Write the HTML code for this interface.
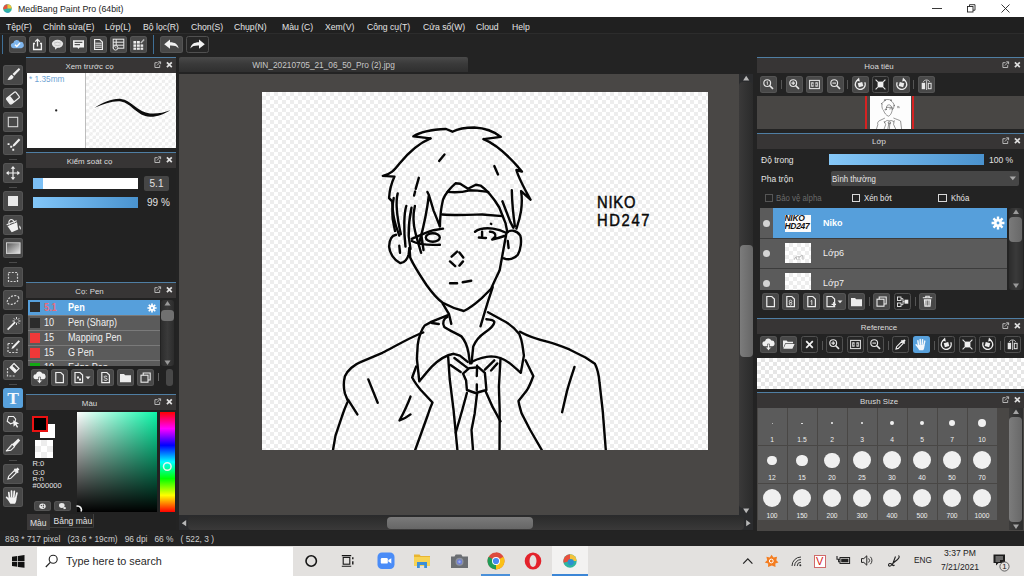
<!DOCTYPE html>
<html lang="vi">
<head>
<meta charset="utf-8">
<title>MediBang Paint Pro (64bit)</title>
<style>
*{box-sizing:border-box;margin:0;padding:0}
html,body{width:1024px;height:576px;overflow:hidden;background:#222222}
body{position:relative;font-family:"Liberation Sans",sans-serif;font-size:9px;color:#d8d8d8;-webkit-font-smoothing:antialiased}
.a{position:absolute}
.t{position:absolute;white-space:nowrap;line-height:1}
.btn{position:absolute;width:17px;height:17px;background:#484848;border-radius:2.5px;box-shadow:inset 0 0 0 1px rgba(255,255,255,.07)}
.btn svg{position:absolute;left:0;top:0;width:17px;height:17px}
.dbtn{position:absolute;width:17px;height:17px;background:#262626;border:1px solid #505050;border-radius:2.5px}
.dbtn svg{position:absolute;left:-1px;top:-1px;width:17px;height:17px}
.tool{position:absolute;left:3px;width:20px;height:20px;background:#484848;border-radius:2.5px;box-shadow:inset 0 0 0 1px rgba(255,255,255,.07)}
.tool svg{position:absolute;left:0;top:0;width:20px;height:20px}
.tsep{position:absolute;left:9px;width:8px;height:1px;background:#4a4a4a}
.vsep{position:absolute;width:1px;height:9px;background:#555}
.ph{position:absolute;height:15px;background:#373535;border-top:1px solid #4f7ea3}
.ph .ttl{position:absolute;left:0;right:0;top:3px;text-align:center;font-size:7.900px;color:#dcdcdc;line-height:1}
.ph .ico{position:absolute;top:2px;right:3px;width:22px;height:10px}
.chk{background-color:#fff;background-image:linear-gradient(45deg,#ededed 25%,transparent 25%,transparent 75%,#ededed 75%),linear-gradient(45deg,#ededed 25%,transparent 25%,transparent 75%,#ededed 75%);background-size:8px 8px;background-position:0 0,4px 4px}
</style>
</head>
<body>
<!-- ===== title bar ===== -->
<div class="a" style="left:0;top:0;width:1024px;height:17px;background:#ffffff"></div>
<svg class="a" style="left:3px;top:4px" width="9" height="9" viewBox="0 0 9 9"><circle cx="4.5" cy="4.5" r="4.3" fill="#2fb4a0"/><path d="M4.5 0.2A4.3 4.3 0 0 0 0.4 5.6L4.5 4.5Z" fill="#e9503c"/><path d="M4.5 0.2A4.3 4.3 0 0 1 8.8 4.5L4.5 4.5Z" fill="#f3c23a"/><path d="M2 7.600A4.300 4.300 0 0 0 7 8z" fill="#2e8fd0"/></svg>
<div class="t" style="left:17.800px;top:4px;font-size:9.600px;color:#1b1b1b;transform:scaleX(.915);transform-origin:0 0">MediBang Paint Pro (64bit)</div>
<svg class="a" style="left:926px;top:0" width="98" height="17" viewBox="0 0 98 17"><g stroke="#222" stroke-width="0.9" fill="none"><path d="M6 8.5h10"/><rect x="41.5" y="6.5" width="5.5" height="5.5"/><path d="M43.5 6.5v-1.8h5.5v5.5h-2"/><path d="M75.5 4.5l8 8M83.5 4.5l-8 8"/></g></svg>
<!-- ===== menu bar ===== -->
<div class="a" style="left:0;top:17px;width:1024px;height:16px;background:#202020"></div>
<div class="t" style="left:6.300px;top:21.500px;font-size:9.600px;color:#e4e4e4;transform:scaleX(.9);transform-origin:0 0">Tệp(F)</div>
<div class="t" style="left:42.500px;top:21.500px;font-size:9.600px;color:#e4e4e4;transform:scaleX(.9);transform-origin:0 0">Chỉnh sửa(E)</div>
<div class="t" style="left:105px;top:21.500px;font-size:9.600px;color:#e4e4e4;transform:scaleX(.9);transform-origin:0 0">Lớp(L)</div>
<div class="t" style="left:142.500px;top:21.500px;font-size:9.600px;color:#e4e4e4;transform:scaleX(.9);transform-origin:0 0">Bộ lọc(R)</div>
<div class="t" style="left:190.500px;top:21.500px;font-size:9.600px;color:#e4e4e4;transform:scaleX(.9);transform-origin:0 0">Chọn(S)</div>
<div class="t" style="left:234px;top:21.500px;font-size:9.600px;color:#e4e4e4;transform:scaleX(.9);transform-origin:0 0">Chụp(N)</div>
<div class="t" style="left:281.500px;top:21.500px;font-size:9.600px;color:#e4e4e4;transform:scaleX(.9);transform-origin:0 0">Màu (C)</div>
<div class="t" style="left:325px;top:21.500px;font-size:9.600px;color:#e4e4e4;transform:scaleX(.9);transform-origin:0 0">Xem(V)</div>
<div class="t" style="left:366.500px;top:21.500px;font-size:9.600px;color:#e4e4e4;transform:scaleX(.9);transform-origin:0 0">Công cụ(T)</div>
<div class="t" style="left:422.500px;top:21.500px;font-size:9.600px;color:#e4e4e4;transform:scaleX(.9);transform-origin:0 0">Cửa sổ(W)</div>
<div class="t" style="left:476px;top:21.500px;font-size:9.600px;color:#e4e4e4;transform:scaleX(.9);transform-origin:0 0">Cloud</div>
<div class="t" style="left:512px;top:21.500px;font-size:9.600px;color:#e4e4e4;transform:scaleX(.9);transform-origin:0 0">Help</div>
<!-- ===== main toolbar ===== -->
<div class="a" style="left:0;top:33px;width:1024px;height:22px;background:#232323;border-top:1px solid #2c2c2c"></div>
<div class="a" style="left:2px;top:35px;width:1px;height:19px;background:#3f6f96"></div>
<div class="a" style="left:153px;top:35px;width:1px;height:19px;background:#3f6f96"></div>
<!-- toolbar buttons -->
<div class="btn" style="left:9px;top:36px"><svg viewBox="0 0 17 17"><path d="M4.6 12.2a2.6 2.6 0 0 1-.3-5.2 3.4 3.4 0 0 1 6.5-1 2.9 2.9 0 0 1 1.6 6.2z" fill="#7fb6ee"/><path d="M6 8.7l1.8 1.8 3.2-3.4" stroke="#fff" stroke-width="1.4" fill="none"/></svg></div>
<div class="btn" style="left:29px;top:36px"><svg viewBox="0 0 17 17"><g stroke="#f2f2f2" stroke-width="1.3" fill="none"><path d="M6 7.5H4.6v6h7.8v-6H11"/><path d="M8.5 10.5V3.5M6.2 5.6l2.3-2.3 2.3 2.3"/></g></svg></div>
<div class="btn" style="left:49px;top:36px"><svg viewBox="0 0 17 17"><ellipse cx="8.5" cy="7.8" rx="5.6" ry="4" fill="#e6e6e6"/><path d="M6.2 10.5l-.2 3.2 3-2.4z" fill="#e6e6e6"/><path d="M5 7.2q3.5-2 7 0M5.6 9q3 1.2 6 0" stroke="#9a9a9a" stroke-width=".5" fill="none"/></svg></div>
<div class="btn" style="left:70px;top:36px"><svg viewBox="0 0 17 17"><path d="M3 4.2h11v7.4H9.6l-1.1 1.5-1.1-1.5H3z" fill="#f0f0f0"/><path d="M4.6 6.4h7.8M4.6 8.6h5.4" stroke="#555" stroke-width="1.1"/></svg></div>
<div class="btn" style="left:90px;top:36px"><svg viewBox="0 0 17 17"><path d="M4.6 3.5h5.2l2.6 2.6v7.4H4.6z" fill="none" stroke="#ececec" stroke-width="1.2"/><path d="M5.4 7.2h6.2M5.4 9.2h6.2M5.4 11.2h6.2" stroke="#ececec" stroke-width="1"/></svg></div>
<div class="btn" style="left:110px;top:36px"><svg viewBox="0 0 17 17"><g stroke="#ececec" stroke-width="1" fill="none"><rect x="3.2" y="3.2" width="10.6" height="9"/><path d="M3.2 6.2h10.6M3.2 9.2h10.6M6.2 3.2v9"/></g><circle cx="5.6" cy="11.8" r="2.3" fill="#474747" stroke="#ececec" stroke-width=".9"/><path d="M5.6 10.6v1.3h1" stroke="#ececec" stroke-width=".6" fill="none"/></svg></div>
<div class="btn" style="left:130px;top:36px"><svg viewBox="0 0 17 17"><g fill="#ececec"><rect x="3.4" y="5" width="2.8" height="2.6"/><rect x="7" y="5" width="2.8" height="2.6"/><rect x="3.4" y="8.4" width="2.8" height="2.4"/><rect x="7" y="8.4" width="2.8" height="2.4"/><rect x="3.4" y="11.6" width="2.8" height="2.2"/><rect x="7" y="11.6" width="2.8" height="2.2"/><rect x="10.6" y="8.4" width="2.6" height="2.4"/><rect x="10.6" y="11.6" width="2.6" height="2.2"/></g><path d="M10.4 6.6l3.2-3.6 1 .9-3.2 3.6z" fill="#bdbdbd"/></svg></div>
<div class="btn" style="left:160px;top:36px;width:23px"><svg viewBox="0 0 23 17" style="width:23px"><path d="M4.2 8.2l5.8-4.6v2.7c5 0 8 2 8.6 6.2-1.9-2.6-4.6-3.1-8.6-3v3.2z" fill="#f2f2f2"/></svg></div>
<div class="dbtn" style="left:186px;top:36px;width:23px"><svg viewBox="0 0 23 17" style="width:23px"><path d="M18.8 8.2l-5.8-4.6v2.7c-5 0-8 2-8.6 6.2 1.900-2.600 4.600-3.100 8.600-3v3.200z" fill="#f2f2f2"/></svg></div>
<!-- ===== left tool strip ===== -->
<div class="a" style="left:0;top:55px;width:26px;height:475px;background:#222222"></div>
<div class="tool" style="top:65px"><svg viewBox="0 0 20 20"><path d="M15.900 3.100l1.300 1.300-5.900 6.400-1.800-1.800z" fill="#f0f0f0"/><path d="M8.700 9.700l2 2c-.9 2.600-3.500 3.500-6.500 3.100 1.500-1 1.700-3.900 4.500-5.100z" fill="#f0f0f0"/></svg></div>
<div class="tool" style="top:88.3px"><svg viewBox="0 0 20 20"><g transform="rotate(-38 10 10)"><rect x="4.200" y="6.300" width="11.600" height="7.400" rx="1.200" fill="none" stroke="#f0f0f0" stroke-width="1.200"/><rect x="4.200" y="6.300" width="4.800" height="7.400" rx="1" fill="#f0f0f0"/></g></svg></div>
<div class="tool" style="top:111.6px"><svg viewBox="0 0 20 20"><rect x="5.300" y="5.300" width="9.400" height="9.400" fill="none" stroke="#dcdcdc" stroke-width="1.050"/></svg></div>
<div class="tool" style="top:135px"><svg viewBox="0 0 20 20"><path d="M15.800 3.600l1.500 1.500-5.600 5.900-2.300.800.800-2.300z" fill="#f0f0f0"/><path d="M4.600 8.200h1.900v1.900H4.600zM7.200 10.800h1.900v1.900H7.200zM9.300 13.800h1.900v1.900H9.300z" fill="#f0f0f0"/></svg></div>
<div class="tsep" style="top:158.5px"></div>
<div class="tool" style="top:163.3px"><svg viewBox="0 0 20 20"><path d="M10 3l2.300 2.700h-1.700v3.700h3.700V7.700L17 10l-2.700 2.300v-1.700h-3.700v3.700h1.700L10 17l-2.300-2.700h1.700v-3.700H5.700v1.700L3 10l2.700-2.300v1.700h3.700V5.700H7.700z" fill="#f0f0f0"/></svg></div>
<div class="tsep" style="top:187px"></div>
<div class="tool" style="top:191.3px"><svg viewBox="0 0 20 20"><rect x="5" y="5" width="10" height="10" fill="#e9e9e9"/></svg></div>
<div class="tool" style="top:214.6px"><svg viewBox="0 0 20 20"><g transform="rotate(-22 10 11)"><path d="M4.800 8.600h10.400l-1.700 7.600H6.500z" fill="#f0f0f0"/><path d="M4.800 8.600h10.400" stroke="#484848" stroke-width=".8"/><path d="M7.200 8.400c-.2-5.600 5.800-5.600 5.600 0" fill="none" stroke="#f0f0f0" stroke-width="1.100"/><path d="M4.600 7.400h10.800" stroke="#f0f0f0" stroke-width="1.100"/></g><path d="M16.600 10.200c1.200 1.600 1.500 3 1.100 4.600-.9-.8-1.500-1.700-1.500-3.200z" fill="#f0f0f0"/></svg></div>
<div class="tool" style="top:238px"><svg viewBox="0 0 20 20"><defs><linearGradient id="gg" x1="0" y1="0" x2="1" y2="1"><stop offset="0" stop-color="#555"/><stop offset="1" stop-color="#e8e8e8"/></linearGradient></defs><rect x="3.500" y="4.800" width="13.600" height="10.600" fill="url(#gg)" stroke="#d8d8d8" stroke-width=".9"/></svg></div>
<div class="tsep" style="top:262px"></div>
<div class="tool" style="top:267px"><svg viewBox="0 0 20 20"><rect x="5.500" y="5.500" width="9" height="9" fill="none" stroke="#cfcfcf" stroke-width="1.200" stroke-dasharray="2 1.300"/></svg></div>
<div class="tool" style="top:290.3px"><svg viewBox="0 0 20 20"><ellipse cx="10" cy="10" rx="6.200" ry="3.800" transform="rotate(-28 10 10)" fill="none" stroke="#cfcfcf" stroke-width="1.200" stroke-dasharray="2 1.300"/></svg></div>
<div class="tool" style="top:313.6px"><svg viewBox="0 0 20 20"><path d="M4 15l7.500-7.500 1.200 1.200L5.200 16.200z" fill="#f2f2f2"/><path d="M13.500 3v2.200M13.500 8.800V11M9.500 7h2.200M15.300 7h2.200M10.800 4.300l1.400 1.400M16.200 4.300l-1.400 1.400M16.200 9.700l-1.400-1.400" stroke="#f2f2f2" stroke-width=".9"/></svg></div>
<div class="tool" style="top:337px"><svg viewBox="0 0 20 20"><path d="M5 6.500h5M5 6.500v9h9v-4.500" fill="none" stroke="#cfcfcf" stroke-width="1.200" stroke-dasharray="2 1.300"/><path d="M15.600 3.200l1.400 1.400-6.400 6.600-2.200.8.800-2.200z" fill="#f2f2f2"/></svg></div>
<div class="tool" style="top:360.3px"><svg viewBox="0 0 20 20"><path d="M4.500 8v8h8.500" fill="none" stroke="#cfcfcf" stroke-width="1.200" stroke-dasharray="2 1.300"/><path d="M11 3.500l5 5-4 4-5-5z" fill="none" stroke="#f2f2f2" stroke-width="1.100"/><path d="M7 7.500l2-2 5 5-2 2z" fill="#f2f2f2"/></svg></div>
<div class="tsep" style="top:384px"></div>
<div class="tool" style="top:388.2px;background:#58a1dc;box-shadow:none"><div class="t" style="left:0;width:20px;top:0;text-align:center;font-family:'Liberation Serif',serif;font-weight:bold;font-size:17.5px;color:#f4f8fc;line-height:20px">T</div></div>
<div class="tool" style="top:412px"><svg viewBox="0 0 20 20"><path d="M5.500 4.500h5l2.200 2.600-1 3.200-4.200 1.500-3.300-2.600z" fill="none" stroke="#f2f2f2" stroke-width="1.100"/><path d="M10.200 8.200l6 3.200-2.600.8 1.600 2.800-1.200.7-1.600-2.800-1.800 1.900z" fill="#f2f2f2"/></svg></div>
<div class="tool" style="top:435.3px"><svg viewBox="0 0 20 20"><path d="M15.300 3.600l1.900 1.900-5.600 6.200-2.500-2.500z" fill="#f0f0f0"/><path d="M9.100 9.200l2.500 2.500-3.600 3.400-4.800.900z" fill="none" stroke="#f0f0f0" stroke-width="1.100" stroke-linejoin="round"/><path d="M3.600 15.800l5-5" stroke="#f0f0f0" stroke-width=".8"/></svg></div>
<div class="tsep" style="top:459.500px"></div>
<div class="tool" style="top:463.700px"><svg viewBox="0 0 20 20"><path d="M5 15l.7-2.800 5.600-5.600 2.100 2.100-5.600 5.600z" fill="none" stroke="#f2f2f2" stroke-width="1.200"/><path d="M10.800 5.400l1.200-1.200 1 .9 1.600-1.500 1.800 1.800-1.500 1.600.9 1-1.200 1.200z" fill="#f2f2f2"/></svg></div>
<div class="tool" style="top:487px"><svg viewBox="0 0 20 20"><g stroke="#f2f2f2" stroke-width="1.700" stroke-linecap="round" fill="none"><path d="M6.400 10.500L5.800 5.600M8.600 9.800L8.500 4M10.800 9.800L11.300 4.300M12.800 10.600L13.900 6"/><path d="M6.300 13.200L3.600 10.400" stroke-width="1.600"/></g><path d="M5.600 10.200h7.900c.3 2.600-.5 4.800-1.500 6.600H7.400c-1-1.200-1.900-2.800-2.400-4.400z" fill="#f2f2f2"/></svg></div>
<!-- ===== left panels ===== -->
<!-- brush preview -->
<div class="ph" style="left:26px;top:57px;width:150px;height:16px"><div class="ttl" style="left:0;right:23px;top:4.500px">Xem trước cọ</div><svg class="ico" style="top:3px" viewBox="0 0 22 10"><path d="M6.600 1.700H3.900v4.800h4.800V4.100" fill="none" stroke="#c4c4c4" stroke-width=".9"/><path d="M5.900 4.500L9.500.9M7.200.8h2.400v2.400" fill="none" stroke="#c4c4c4" stroke-width=".9"/><path d="M15.900 1.300l4.900 4.900M20.800 1.300l-4.900 4.900" stroke="#e0e0e0" stroke-width="1.700"/></svg></div>
<div class="a" style="left:27px;top:73px;width:58px;height:75px;background:#ffffff"></div>
<div class="a" style="left:85px;top:73px;width:1px;height:75px;background:#bdbdbd"></div>
<div class="a chk" style="left:86px;top:73px;width:90px;height:75px;background-size:6.6px 6.6px;background-position:0 0,3.3px 3.3px"></div>
<div class="t" style="left:29px;top:75px;font-size:8.300px;color:#6ea3d3">* 1.35mm</div>
<svg class="a" style="left:27px;top:73px" width="149" height="75" viewBox="27 73 149 75"><circle cx="56.2" cy="110.4" r="1.15" fill="#222"/><path d="M94.5 107.8C104 102.2 112 98.3 121 98.9 131 99.8 138 112.3 150 113.4 157 114 164 112.5 170.5 110.2 164 114 157 116.9 150 116.7 137 116.2 131 102.8 121 101.4 112 100.7 104 104 94.5 107.800z" fill="#0c0c0c"/></svg>
<!-- brush control -->
<div class="a" style="left:26px;top:148px;width:150px;height:4px;background:#222"></div>
<div class="ph" style="left:26px;top:152px;width:150px;height:16px"><div class="ttl" style="left:0;right:23px;top:4.500px">Kiểm soát cọ</div><svg class="ico" style="top:3px" viewBox="0 0 22 10"><path d="M6.600 1.700H3.900v4.800h4.800V4.100" fill="none" stroke="#c4c4c4" stroke-width=".9"/><path d="M5.900 4.500L9.500.9M7.200.8h2.400v2.400" fill="none" stroke="#c4c4c4" stroke-width=".9"/><path d="M15.900 1.300l4.900 4.900M20.800 1.300l-4.900 4.900" stroke="#e0e0e0" stroke-width="1.700"/></svg></div>
<div class="a" style="left:26px;top:168px;width:150px;height:114px;background:#222222"></div>
<div class="a" style="left:33px;top:177.500px;width:105px;height:11px;background:#ffffff"></div>
<div class="a" style="left:33px;top:177.500px;width:10px;height:11px;background:#7cc0f5"></div>
<div class="a" style="left:144px;top:176px;width:25px;height:14.500px;background:#464646;border-radius:2px"></div>
<div class="t" style="left:144px;width:25px;text-align:center;top:178.500px;font-size:10px;color:#e2e2e2">5.1</div>
<div class="a" style="left:33px;top:196.500px;width:105px;height:11px;background:linear-gradient(90deg,#82c6f8,#4a93cf)"></div>
<div class="t" style="left:147px;top:197.500px;font-size:10px;color:#e2e2e2">99 %</div>
<!-- brush list -->
<div class="ph" style="left:26px;top:282px;width:150px;height:16px"><div class="ttl" style="left:0;right:23px;top:4.500px">Cọ: Pen</div><svg class="ico" style="top:3px" viewBox="0 0 22 10"><path d="M6.600 1.700H3.900v4.800h4.800V4.100" fill="none" stroke="#c4c4c4" stroke-width=".9"/><path d="M5.900 4.500L9.500.9M7.200.8h2.400v2.400" fill="none" stroke="#c4c4c4" stroke-width=".9"/><path d="M15.900 1.300l4.900 4.900M20.800 1.300l-4.900 4.900" stroke="#e0e0e0" stroke-width="1.700"/></svg></div>
<div class="a" style="left:26px;top:298px;width:150px;height:96px;background:#222222"></div>
<div class="a" style="left:28px;top:299.500px;width:132px;height:66.500px;background:#5b5b5b;overflow:hidden">
 <div class="a" style="left:0;top:0;width:132px;height:15px;background:#569fdb"></div>
 <div class="a" style="left:0;top:15px;width:132px;height:1px;background:#7a7a7a"></div>
 <div class="a" style="left:0;top:30px;width:132px;height:1px;background:#7a7a7a"></div>
 <div class="a" style="left:0;top:45px;width:132px;height:1px;background:#7a7a7a"></div>
 <div class="a" style="left:0;top:60px;width:132px;height:1px;background:#7a7a7a"></div>
 <div class="a" style="left:2px;top:2.500px;width:10px;height:10px;background:#2b2b2b"></div>
 <div class="a" style="left:2px;top:18px;width:10px;height:10px;background:#2b2b2b"></div>
 <div class="a" style="left:2px;top:33px;width:10px;height:10px;background:#f03838"></div>
 <div class="a" style="left:2px;top:48px;width:10px;height:10px;background:#f03838"></div>
 <div class="a" style="left:2px;top:63px;width:10px;height:10px;background:#12a812"></div>
 <div class="t" style="left:16px;top:3px;font-size:10px;transform:scaleX(.91);transform-origin:0 0;font-weight:bold;color:#e86a78">5.1</div>
 <div class="t" style="left:40px;top:3px;font-size:10px;transform:scaleX(.91);transform-origin:0 0;font-weight:bold;color:#ffffff">Pen</div>
 <div class="t" style="left:16px;top:18.500px;font-size:10px;transform:scaleX(.91);transform-origin:0 0;color:#f0f0f0">10</div>
 <div class="t" style="left:40px;top:18.500px;font-size:10px;transform:scaleX(.91);transform-origin:0 0;color:#f0f0f0">Pen (Sharp)</div>
 <div class="t" style="left:16px;top:33.500px;font-size:10px;transform:scaleX(.91);transform-origin:0 0;color:#f0f0f0">15</div>
 <div class="t" style="left:40px;top:33.500px;font-size:10px;transform:scaleX(.91);transform-origin:0 0;color:#f0f0f0">Mapping Pen</div>
 <div class="t" style="left:16px;top:48.500px;font-size:10px;transform:scaleX(.91);transform-origin:0 0;color:#f0f0f0">15</div>
 <div class="t" style="left:40px;top:48.500px;font-size:10px;transform:scaleX(.91);transform-origin:0 0;color:#f0f0f0">G Pen</div>
 <div class="t" style="left:16px;top:63.500px;font-size:10px;transform:scaleX(.91);transform-origin:0 0;color:#f0f0f0">10</div>
 <div class="t" style="left:40px;top:63.500px;font-size:10px;transform:scaleX(.91);transform-origin:0 0;color:#f0f0f0">Edge Pen</div>
 <svg class="a" style="left:119px;top:3px" width="10" height="10" viewBox="0 0 10 10"><g id="gear"><circle cx="5" cy="5" r="2.800" fill="#fff"/><g stroke="#fff" stroke-width="1.700"><path d="M5 .4v9.200M.4 5h9.200M1.750 1.750l6.500 6.500M8.250 1.750l-6.500 6.500"/></g><circle cx="5" cy="5" r="1" fill="#569fdb"/></g></svg>
</div>
<!-- brush list scrollbar -->
<div class="a" style="left:161px;top:299.500px;width:13px;height:66.500px;background:linear-gradient(90deg,#2c2c2c,#3a3a3a 50%,#2c2c2c);border-radius:3px"></div>
<div class="a" style="left:161px;top:310px;width:13px;height:11px;background:#707070;border-radius:3.500px"></div>
<svg class="a" style="left:161px;top:299px" width="13" height="68" viewBox="0 0 13 68"><path d="M6.500 2l3 4.600h-6z" fill="#9a9a9a"/><path d="M6.500 66l3-4.600h-6z" fill="#9a9a9a"/></svg>
<!-- brush list toolbar -->
<div class="btn" style="left:31px;top:369px"><svg viewBox="0 0 17 17"><path d="M4.800 10.200a2.500 2.500 0 0 1 .2-5 3.300 3.300 0 0 1 6.300-.6 2.800 2.800 0 0 1 .9 5.600z" fill="#f0f0f0"/><path d="M8.500 14.500l-3-3.300h2V8h2v3.200h2z" fill="#f0f0f0" stroke="#474747" stroke-width=".6"/></svg></div>
<div class="btn" style="left:51px;top:369px"><svg viewBox="0 0 17 17"><path d="M4.800 3.500h5l2.600 2.600v7.500H4.800z" fill="none" stroke="#ececec" stroke-width="1.200"/></svg></div>
<div class="btn" style="left:71px;top:369px;width:23px"><svg viewBox="0 0 23 17" style="width:23px"><path d="M4 3.500h5l2.600 2.600v7.500H4z" fill="none" stroke="#ececec" stroke-width="1.200"/><path d="M6 7.500h2v2H6zM8 9.500h2v2H8z" fill="#ececec"/><path d="M14.500 7.500h5l-2.500 2.800z" fill="#ececec"/></svg></div>
<div class="btn" style="left:97px;top:369px"><svg viewBox="0 0 17 17"><path d="M4.800 3.500h5l2.600 2.600v7.500H4.800z" fill="none" stroke="#ececec" stroke-width="1.200"/><path d="M10.200 7.600c-1.800-1-3.500-.4-3.200.7.300 1.200 3.300.6 3.300 2 0 1.200-2 1.500-3.600.5" fill="none" stroke="#ececec" stroke-width=".9"/></svg></div>
<div class="btn" style="left:117px;top:369px"><svg viewBox="0 0 17 17"><path d="M3 5h4l1.200 1.300H14v7H3z" fill="#ececec"/></svg></div>
<div class="btn" style="left:137px;top:369px"><svg viewBox="0 0 17 17"><g fill="none" stroke="#ececec" stroke-width="1.100"><rect x="4" y="6.200" width="7" height="7"/><path d="M6.200 6.200V4h7v7h-2.200"/></g></svg></div>
<div class="a" style="left:158px;top:373px;width:1px;height:8px;background:#666"></div>
<div class="a" style="left:166px;top:369px;width:6.500px;height:17px;background:#484848;border-radius:3px"></div>
<!-- ===== color panel ===== -->
<div class="ph" style="left:26px;top:394px;width:150px;height:16px"><div class="ttl" style="left:0;right:23px;top:4.500px">Màu</div><svg class="ico" style="top:3px" viewBox="0 0 22 10"><path d="M6.600 1.700H3.900v4.800h4.800V4.100" fill="none" stroke="#c4c4c4" stroke-width=".9"/><path d="M5.900 4.500L9.500.9M7.200.8h2.400v2.400" fill="none" stroke="#c4c4c4" stroke-width=".9"/><path d="M15.900 1.300l4.900 4.900M20.800 1.300l-4.900 4.900" stroke="#e0e0e0" stroke-width="1.700"/></svg></div>
<div class="a" style="left:26px;top:410px;width:150px;height:120px;background:#222222"></div>
<div class="a" style="left:77px;top:412px;width:80px;height:99.500px;background:#0cf6a8"></div>
<div class="a" style="left:77px;top:412px;width:80px;height:99.500px;background:linear-gradient(90deg,#ffffff,rgba(255,255,255,0))"></div>
<div class="a" style="left:77px;top:412px;width:80px;height:99.500px;background:linear-gradient(180deg,rgba(0,0,0,0),#000000)"></div>
<div class="a" style="left:160px;top:412px;width:15px;height:99.500px;background:linear-gradient(180deg,#ff0000 0%,#ff00ff 16.600%,#0000ff 33.300%,#00ffff 50%,#00ff00 66.600%,#ffff00 83.300%,#ff0000 100%)"></div>
<svg class="a" style="left:158px;top:460px" width="18" height="14" viewBox="0 0 18 14"><circle cx="9.300" cy="6.500" r="3.800" fill="none" stroke="#e6f6f0" stroke-width="1.500"/></svg>
<svg class="a" style="left:73px;top:504px" width="12" height="10" viewBox="0 0 12 10"><path d="M3.500 2.200a3.800 3.800 0 0 1 4.500 5.300" fill="none" stroke="#f4f4f4" stroke-width="1.600"/></svg>
<div class="a" style="left:39.500px;top:423.500px;width:15px;height:14.500px;background:#ffffff"></div>
<div class="a" style="left:32px;top:415.500px;width:16px;height:16.500px;background:#000000;border:2px solid #ea1212"></div>
<div class="a chk" style="left:34.500px;top:440px;width:18px;height:18px;background-size:12px 12px;background-position:0 0,6px 6px"></div>
<div class="t" style="left:32.500px;top:460px;font-size:7.500px;color:#e6e6e6">R:0</div>
<div class="t" style="left:32.500px;top:468.500px;font-size:7.500px;color:#e6e6e6">G:0</div>
<div class="a" style="left:32px;top:476px;width:30px;height:5px;overflow:hidden"><div class="t" style="left:.5px;top:0;font-size:7.500px;color:#e6e6e6">B:0</div></div>
<div class="t" style="left:32.500px;top:482px;font-size:7.500px;color:#e6e6e6">#000000</div>
<div class="btn" style="left:34px;top:501px;height:10px"><svg viewBox="0 0 17 10" style="height:10px"><ellipse cx="8.500" cy="5.200" rx="3.200" ry="2.700" fill="#e8e8e8"/><circle cx="7.400" cy="4.600" r=".7" fill="#474747"/><circle cx="9.400" cy="4.300" r=".7" fill="#474747"/><circle cx="9.300" cy="6.300" r=".7" fill="#474747"/></svg></div>
<div class="btn" style="left:54px;top:501px;height:10px"><svg viewBox="0 0 17 10" style="height:10px"><ellipse cx="7.800" cy="4.500" rx="2.800" ry="2.400" fill="#e8e8e8"/><path d="M9 6l3 1.800-2.200.4z" fill="#e8e8e8"/><circle cx="10.800" cy="7" r="1.100" fill="#e8e8e8"/></svg></div>
<div class="a" style="left:27px;top:514px;width:23px;height:16px;background:#3b3939"></div>
<div class="t" style="left:30px;top:519px;font-size:8.500px;color:#e0e0e0">Màu</div>
<div class="a" style="left:50px;top:513.500px;width:43.500px;height:14px;background:#252525;border-right:1px solid #3e3e3e;border-bottom:1px solid #3e3e3e;border-radius:0 0 2px 0"></div>
<div class="t" style="left:53.500px;top:517px;font-size:8.500px;color:#e0e0e0">Bảng màu</div>
<!-- ===== center: document tab / canvas area ===== -->
<div class="a" style="left:176px;top:55px;width:581px;height:475px;background:#232323"></div>
<div class="a" style="left:179px;top:56.500px;width:289px;height:15px;background:linear-gradient(180deg,#4a4a4a,#3a3a3a 45%,#2f2f2f);border-radius:2px 2px 0 0"></div>
<div class="t" style="left:179px;width:289px;text-align:center;top:60.500px;font-size:8.300px;color:#c8c8c8">WIN_20210705_21_06_50_Pro (2).jpg</div>
<div class="a" style="left:179px;top:74px;width:574px;height:456px;background:#494745"></div>
<!-- v scrollbar -->
<div class="a" style="left:738.5px;top:74px;width:14.5px;height:441px;background:#2a2b2d"></div>
<div class="a" style="left:738.5px;top:81.5px;width:14.5px;height:426px;background:linear-gradient(90deg,#3a3939,#323232 50%,#2b2b2b);border-radius:4px"></div>
<div class="a" style="left:739.5px;top:244.5px;width:13px;height:112px;background:linear-gradient(90deg,#7c7c7c,#666666);border-radius:4px"></div>
<svg class="a" style="left:738.5px;top:74px" width="14.5" height="441" viewBox="0 0 14.5 441"><path d="M7.2 1.800l3.100 4.600h-6.200z" fill="#b8b8b8"/><path d="M7.2 439.200l3.100-4.600h-6.200z" fill="#b8b8b8"/></svg>
<!-- h scrollbar -->
<div class="a" style="left:179px;top:515px;width:574px;height:15px;background:#2a2b2d"></div>
<div class="a" style="left:188px;top:515.5px;width:556px;height:14px;background:linear-gradient(180deg,#2b2b2b,#323232 50%,#3a3939);border-radius:4px"></div>
<div class="a" style="left:387px;top:516.5px;width:146px;height:12.5px;background:linear-gradient(180deg,#7a7a7a,#666666);border-radius:4px"></div>
<svg class="a" style="left:179px;top:515.5px" width="574" height="14.5" viewBox="0 0 574 14.5"><path d="M2.800 7.200l4.400-3.100v6.200z" fill="#b8b8b8"/><path d="M571.600 7.200l-4.400-3.100v6.200z" fill="#b8b8b8"/></svg>
<!-- canvas -->
<div class="a chk" id="canvas" style="left:261.500px;top:92px;width:446px;height:357.500px;background-color:#ffffff"></div>
<!-- drawing -->
<svg class="a" style="left:261.500px;top:92px" width="446" height="357.500" viewBox="261.500 92 446 357.500" fill="none" stroke="#050505" stroke-width="2.400" stroke-linecap="round" stroke-linejoin="round">
<!-- hair outline -->
<path d="M430 138.400L412.800 136.400C420 131.500 434 129.500 445.600 129L451.900 131.700C458 128.600 466 127.500 473.800 127.500 484 128 493 131 500.300 136.900L483.100 139.100"/>
<path d="M430 138.400C419 143 408 152.500 398.800 163.800 394 170 390 174.500 382.300 175.900L394 176.600C391 183 389 190 388.600 198.100L391.700 201.300C392 210 393.500 220 395.600 226.300L398.800 235.600"/>
<path d="M483.100 139.100C495 144 508 156 517.500 166.900L521.400 171.600 515.900 170C518 178 523 187 530 199.700L520.600 191.100C521.500 197 521.500 204 520.600 210.600 519.500 218 517.500 224 515.900 228.600"/>
<path d="M444 154.400L438.600 160.900M493.800 166.100L497.500 174.400M418.300 177.800L415.200 188.800M414.600 191.500L413.600 195.500"/>
<path d="M397.200 193.400C395.500 200 396 215 400.300 234M405.800 206C403.500 213 403 230 405 246.600M414.400 206C412.500 214 412.500 224 415 233 417 241 419 247 420.600 252.800"/>
<path d="M426.900 191.900L428.400 195C427 207 425 220 419 241.900M428.400 195L433.100 210.600 439.400 226.300"/>
<path d="M411 207.700C409 217 408 228 408.200 236.300L410 249M393.200 198C392 205 391.500 212 392.200 219L394.500 231"/>
<!-- bangs opening -->
<path d="M439.400 226.300C439.500 218 440.500 208 442.500 199.700 444 195 450 187.500 455 183.300L459.700 183.800 467.500 188.800 475.300 184.800 480 185.600C487 190.500 493 198 498.800 207.500L505 223.100 506.600 231"/>
<path d="M447.200 191.900C455 192.600 463 192 469 190.300L476.900 190.600 487.800 191.900"/>
<path d="M441.700 214.500C455 215.500 470 214.800 481.600 214.500L501.900 216.100"/>
<path d="M501.900 201.300L509.700 221.600 512.800 227.800M511.300 190.300C511.500 200 512.500 213 514.400 226.300"/>
<!-- ears -->
<path d="M395.600 234.800C391.500 235.500 388.800 240 388.600 246.600 389 253 393.500 260 399.500 263 404 263.500 407.500 258 408.100 254.400L409 248M398.800 245.800L399.500 252.800"/>
<path d="M506.600 232.500C510 229.500 516 229.800 519.800 235.600 521.500 241 520 250 517.500 254.400 514 259 508 260.500 503.400 258.300M507.300 241L508.100 248"/>
<!-- face -->
<path d="M409 248.100L409.700 257.500C412 263 420 276 426 285 431 292 437 299 442.200 302.800 449 306.500 457 309.500 463.300 311 470 308 478 301 481.300 298.100 486 293.500 489 290.500 490.600 288.800 494 281 497.500 274 499.200 270 501 260 503.400 246.600 505.800 234"/>
<!-- left eye -->
<path d="M411.300 238.800C418 236 425 232.500 433.100 230.200L442.500 228.600M411.300 241C417 244 425 245.500 439.400 244.700M421 236L423 250"/>
<ellipse cx="432.300" cy="237.500" rx="7" ry="4.300"/>
<!-- right eye -->
<path d="M474.500 231.700C478 229 485 227.800 492.500 228.600 498 229.500 502 231 505 232.500M481.600 231.700L481.600 237.200M478.400 237.500L485.500 238M489.400 231.700C493.500 231.500 495.500 234 494.800 236.500L492.500 238.800M491.700 239.500C497 238.500 501 237 505 235.600M490.400 223.800L490.800 224"/>
<!-- nose / mouth -->
<path d="M456.6 251.6L451.1 256.7M449.5 261.4L454.7 266.1M458.9 252.5L462.8 257.5M462.5 261.4L458.9 265.6"/>
<path d="M449.500 283.300L456.600 283.300M462.200 282.200L470.700 280.800"/>
<!-- neck -->
<path d="M442.200 303.600L448.400 313.800 450.800 323.900M492.200 287.200L487.500 301.300 482.800 316.900 480 326.300"/>
<!-- collar -->
<path d="M446.900 316.900C443 318.500 441.500 323 443.800 327 448 330 456 333.500 460.900 336.400 464 340 467 347 468 352.800L469.500 363.400"/>
<path d="M446.900 315.300L431.300 321.600 424.200 325.500C421 329 418 338 417.200 345L416.400 358.800 418.800 381.400C424 375 428 370 431.300 366.600 437 361 446 355 453.100 353.800L459.400 355.600 467.200 361.900"/>
<path d="M431.300 323L438.300 324"/>
<path d="M485.900 319.200C490 319.500 494 320.500 493.800 322.300 493.500 325 488 330 484.400 332.500 480 335.500 475 341 472.700 346.600L471 363.400"/>
<path d="M487.500 312.200L501.600 320C507 322.500 514 328 518.800 334 520.500 338 521.500 342 521.900 345L523.400 355.600 520.300 372.800C516 369 512 365.500 509.400 363.400 505 360 498 356.500 490.600 356.400 484 356.500 476 359.500 471 361.900"/>
<!-- shoulders -->
<path d="M422.700 332.500L418.800 334C408 338.500 395 346 381.900 352.800L360 362.200C354 364.500 347 370 344.400 376.300 343 382 343 388 344.400 393.400L347.500 401.300C345 406 343 412 341.300 416.900L335 435.600 332.500 450"/>
<path d="M367.800 379.400L377.200 402.800M347.500 399.700L356.900 414.400"/>
<path d="M519.500 331.700C527 336 536 339 547.500 341.900 556 344 563 347 569.400 349.700L585 357.500 594.400 363.800C597 369 598.500 376 599 382.500L602.200 410.600 605.300 450"/>
<path d="M574 366.900C571 376 568 385 566.300 391.900L561.600 412.200"/>
<!-- lapels -->
<path d="M415.600 366.600L411.700 377.500C414 382 417 386 420.300 390L432 402.500C430 407 428.500 411 427.300 415L421.900 430 414.700 450"/>
<path d="M410 396.600C407 405 403 413 399 420.500 403 419 407 416.800 410 414.400"/>
<path d="M525 360.300L532.800 376C531 381 529 386 526.600 390L518 401C518.500 405 520 409.500 521.100 413.400L529.700 430 541.300 450"/>
<!-- shirt and tie -->
<path d="M447.700 357.200L449.200 379 453.100 410.300 456.900 450M500 358.800L498.400 386.900 499.200 410.300 499 450"/>
<path d="M462.500 373.600L468.800 368.100 478.100 367.300 484.400 372.800 485.900 390 475 393 466.400 390 465.600 380.600Z"/>
<path d="M476.600 365.800L476.300 376M476.300 384.500L476.300 390"/>
<path d="M453.900 358L467.200 368.100M450 365L460.200 372M493.800 360.300L484.400 369.700M496.900 363.400L490.600 370.500"/>
<path d="M466.400 393L461.700 410.300 455.300 432.500M476.600 393L474.200 413.400 471 430 472.500 450M485.200 391.600L492.200 407.200 500 421.300"/>
</svg>
<div class="t" style="left:596.6px;top:194.3px;font-size:16.6px;line-height:17.6px;color:#0a0a0a;-webkit-text-stroke:.5px #0a0a0a;transform:scaleX(.89);transform-origin:0 0"><span style="letter-spacing:.9px">NIKO</span><br><span style="letter-spacing:1.85px">HD247</span></div>
<!-- ===== right: navigator ===== -->
<div class="a" style="left:753px;top:55px;width:271px;height:475px;background:#232323"></div>
<div class="ph" style="left:757px;top:57px;width:267px;height:16px"><div class="ttl" style="left:0;right:23px;top:4.500px">Hoa tiêu</div><svg class="ico" style="top:3px" viewBox="0 0 22 10"><path d="M6.600 1.700H3.900v4.800h4.800V4.100" fill="none" stroke="#c4c4c4" stroke-width=".9"/><path d="M5.900 4.500L9.500.9M7.200.8h2.400v2.400" fill="none" stroke="#c4c4c4" stroke-width=".9"/><path d="M15.900 1.300l4.900 4.900M20.800 1.300l-4.900 4.900" stroke="#e0e0e0" stroke-width="1.700"/></svg></div>
<div class="a" style="left:757px;top:73px;width:267px;height:23px;background:#232323"></div>
<div class="btn" style="left:760px;top:76px"><svg viewBox="0 0 17 17"><circle cx="7.2" cy="7.1" r="3.4" fill="none" stroke="#e6e6e6" stroke-width="1.15"/><path d="M9.8 9.7l3.2 3.200" stroke="#e6e6e6" stroke-width="1.55"/><path d="M6.6 6.1l.8-.5v3.200" stroke="#e6e6e6" stroke-width=".85" fill="none"/></svg></div>
<div class="vsep" style="left:781px;top:80px"></div>
<div class="btn" style="left:785.500px;top:76px"><svg viewBox="0 0 17 17"><circle cx="7.2" cy="7.1" r="3.4" fill="none" stroke="#e6e6e6" stroke-width="1.15"/><path d="M9.8 9.7l3.2 3.200" stroke="#e6e6e6" stroke-width="1.55"/><path d="M5.4 7.1h3.6M7.2 5.300v3.600" stroke="#e6e6e6" stroke-width="1.1"/></svg></div>
<div class="btn" style="left:806px;top:76px"><svg viewBox="0 0 17 17"><rect x="3.6" y="4.4" width="9.8" height="8.2" fill="none" stroke="#e2e2e2" stroke-width="1.05"/><path d="M5.2 6.200h2.400v4.600H5.200zM9.400 6.200h2.400v4.600H9.400z" fill="#dcdcdc"/><path d="M7.600 8.500l-1.400-1.300v2.600zM9.400 8.500l1.400-1.300v2.600z" fill="#484848"/></svg></div>
<div class="btn" style="left:826.500px;top:76px"><svg viewBox="0 0 17 17"><circle cx="7.2" cy="7.1" r="3.4" fill="none" stroke="#e6e6e6" stroke-width="1.15"/><path d="M9.8 9.7l3.2 3.200" stroke="#e6e6e6" stroke-width="1.55"/><path d="M5.4 7.1h3.6" stroke="#e6e6e6" stroke-width="1.1"/></svg></div>
<div class="vsep" style="left:847px;top:80px"></div>
<div class="btn" style="left:851.500px;top:76px"><svg viewBox="0 0 17 17"><path d="M12.800 6.200a5 5 0 1 1-6.600-2.400" fill="none" stroke="#ececec" stroke-width="1.300"/><path d="M7 1.600L4.200 4.400l3.600 1.200z" fill="#ececec"/><rect x="6.200" y="6.500" width="4.600" height="4.200" fill="#ececec" transform="rotate(-15 8.500 8.500)"/></svg></div>
<div class="dbtn" style="left:872px;top:76px"><svg viewBox="0 0 17 17"><rect x="5.6" y="5.6" width="5.8" height="5.800" fill="#f0f0f0"/><path d="M3.600 3.600l2.200 2.200M13.400 3.600l-2.200 2.200M13.400 13.400l-2.200-2.200M3.600 13.400l2.200-2.200" stroke="#e4e4e4" stroke-width="1.1"/></svg></div>
<div class="btn" style="left:892.500px;top:76px"><svg viewBox="0 0 17 17"><path d="M4.200 6.200a5 5 0 1 0 6.600-2.400" fill="none" stroke="#ececec" stroke-width="1.300"/><path d="M10 1.600l2.800 2.800-3.600 1.200z" fill="#ececec"/><rect x="6.200" y="6.500" width="4.600" height="4.200" fill="#ececec" transform="rotate(15 8.500 8.500)"/></svg></div>
<div class="vsep" style="left:913px;top:80px"></div>
<div class="btn" style="left:917.500px;top:76px"><svg viewBox="0 0 17 17"><rect x="3.7" y="6.8" width="3.4" height="6.4" fill="#e8e8e8"/><rect x="10.3" y="7.3" width="2.8" height="5.4" fill="none" stroke="#e8e8e8" stroke-width="1"/><path d="M8.6 4.5v9.500" stroke="#e8e8e8" stroke-width=".8"/><path d="M5.4 5.800c.8-2.400 5.400-2.400 6.200 0" fill="none" stroke="#e8e8e8" stroke-width=".8"/></svg></div>
<div class="a" style="left:757px;top:96px;width:267px;height:33px;background:#484644"></div>
<div class="a" style="left:865px;top:96px;width:2px;height:33px;background:#d62222"></div>
<div class="a" style="left:911.500px;top:96px;width:2.500px;height:33px;background:#d62222"></div>
<div class="a" style="left:870px;top:96px;width:41px;height:33px;background:#fdfdfd"></div>
<svg class="a" style="left:870px;top:96px" width="41" height="33" viewBox="261.500 92 446 357.500" fill="none" stroke="#444" stroke-width="6" stroke-linecap="round"><path d="M430 138L413 136C430 128 460 126 500 137L483 139C500 150 520 170 530 200L520 191C522 210 518 225 516 229M430 138C410 150 395 172 382 176L394 177C388 200 392 220 399 236"/><path d="M409 248C415 275 440 305 463 311 485 300 497 280 506 234M440 226C440 200 450 186 467 188 480 184 495 200 506 231M442 215H502"/><ellipse cx="432" cy="238" rx="8" ry="5"/><path d="M475 232C485 228 497 229 505 233"/><path d="M419 334L360 362C343 372 342 395 347 401L332 450M520 332C550 345 585 355 594 364L605 450M418 381C430 362 453 348 467 362M520 373C510 360 490 352 471 362M416 367L432 402 415 450M525 360L518 401 541 450M463 374H485V392H466ZM466 393L455 450M477 393L472 450"/><path d="M560 205h16M560 218h22" stroke-width="5"/></svg>
<!-- ===== right: layers ===== -->
<div class="a" style="left:757px;top:129px;width:267px;height:3.500px;background:#232323"></div>
<div class="ph" style="left:757px;top:132.500px;width:267px;height:16px"><div class="ttl" style="left:0;right:23px;top:4.500px">Lớp</div><svg class="ico" style="top:3px" viewBox="0 0 22 10"><path d="M6.600 1.700H3.900v4.800h4.800V4.100" fill="none" stroke="#c4c4c4" stroke-width=".9"/><path d="M5.900 4.500L9.500.9M7.200.8h2.400v2.400" fill="none" stroke="#c4c4c4" stroke-width=".9"/><path d="M15.900 1.300l4.900 4.900M20.800 1.300l-4.900 4.900" stroke="#e0e0e0" stroke-width="1.700"/></svg></div>
<div class="a" style="left:757px;top:148.500px;width:267px;height:166px;background:#232323"></div>
<div class="t" style="left:761px;top:155.500px;font-size:8.500px;color:#e2e2e2">Độ trong</div>
<div class="a" style="left:829px;top:153.500px;width:154.500px;height:11.500px;background:linear-gradient(90deg,#86c8f8,#4a92ce)"></div>
<div class="t" style="left:989px;top:155.500px;font-size:8.500px;color:#e2e2e2">100 %</div>
<div class="t" style="left:761px;top:174.500px;font-size:8.500px;color:#e2e2e2">Pha trộn</div>
<div class="a" style="left:830.500px;top:171px;width:188.500px;height:14.500px;background:#464646;border-radius:2px"></div>
<div class="t" style="left:832px;top:174.500px;font-size:8.500px;color:#e6e6e6;transform:scaleX(.92);transform-origin:0 0">Bình thường</div>
<svg class="a" style="left:1009px;top:176px" width="8" height="5" viewBox="0 0 8 5"><path d="M.6.600h6.400l-3.200 3.600z" fill="#a8a8a8"/></svg>
<div class="a" style="left:764.500px;top:193.500px;width:8px;height:8px;border:1px solid #555"></div>
<div class="t" style="left:776px;top:193.500px;font-size:8.500px;color:#6a6a6a;transform:scaleX(.92);transform-origin:0 0">Bảo vệ alpha</div>
<div class="a" style="left:851.500px;top:193.500px;width:8.500px;height:8.500px;border:1px solid #d8d8d8"></div>
<div class="t" style="left:863.500px;top:193.500px;font-size:8.500px;color:#e6e6e6;transform:scaleX(.92);transform-origin:0 0">Xén bớt</div>
<div class="a" style="left:938px;top:193.500px;width:8.500px;height:8.500px;border:1px solid #d8d8d8"></div>
<div class="t" style="left:950.500px;top:193.500px;font-size:8.500px;color:#e6e6e6;transform:scaleX(.92);transform-origin:0 0">Khóa</div>
<!-- layer list -->
<div class="a" style="left:759.500px;top:208px;width:247.500px;height:81.500px;background:#5b5b5b;overflow:hidden">
 <div class="a" style="left:13.500px;top:0;width:234px;height:30px;background:#569fdb"></div>
 <div class="a" style="left:0;top:30px;width:247.500px;height:1px;background:#3c3c3c"></div>
 <div class="a" style="left:0;top:60px;width:247.500px;height:1px;background:#3c3c3c"></div>
 <div class="a" style="left:3px;top:11.500px;width:7px;height:7px;border-radius:50%;background:#d4d4d4"></div>
 <div class="a" style="left:3px;top:41.500px;width:7px;height:7px;border-radius:50%;background:#d4d4d4"></div>
 <div class="a" style="left:3px;top:71.500px;width:7px;height:7px;border-radius:50%;background:#d4d4d4"></div>
 <div class="a" style="left:25px;top:6.500px;width:26px;height:17px;background:#fbfbfb;overflow:hidden"><div class="t" style="left:0;top:-1px;font-size:8.500px;line-height:8.500px;font-weight:bold;font-style:italic;color:#111;letter-spacing:-.3px">NIKO<br>HD247</div></div>
 <div class="a chk" style="left:25px;top:35px;width:26px;height:20px"></div>
 <svg class="a" style="left:25px;top:35px" width="26" height="20" viewBox="0 0 26 20"><path d="M9 17c1-3 3-4 5-3s2-3 3-2 1 3 1 5M11 14l1 3M14 13v4" fill="none" stroke="#9a9a9a" stroke-width=".6"/></svg>
 <div class="a chk" style="left:25px;top:65px;width:26px;height:20px"></div>
 <div class="t" style="left:63.500px;top:10.500px;font-size:9px;font-weight:bold;color:#ffffff">Niko</div>
 <div class="t" style="left:63.500px;top:40.500px;font-size:9px;color:#f0f0f0">Lớp6</div>
 <div class="t" style="left:63.500px;top:70.500px;font-size:9px;color:#f0f0f0">Lớp7</div>
 <svg class="a" style="left:231px;top:8px" width="14" height="14" viewBox="0 0 10 10"><circle cx="5" cy="5" r="2.800" fill="#fff"/><g stroke="#fff" stroke-width="1.700"><path d="M5 .4v9.200M.4 5h9.200M1.750 1.750l6.500 6.500M8.250 1.750l-6.500 6.500"/></g><circle cx="5" cy="5" r="1" fill="#569fdb"/></svg>
</div>
<!-- layer scrollbar -->
<div class="a" style="left:1008.500px;top:208px;width:14px;height:81.500px;background:linear-gradient(90deg,#2c2c2c,#3a3a3a 50%,#2c2c2c);border-radius:3px"></div>
<div class="a" style="left:1009px;top:217px;width:13px;height:24.500px;background:linear-gradient(90deg,#7a7a7a,#686868);border-radius:4px"></div>
<svg class="a" style="left:1008.500px;top:208px" width="14" height="81.500" viewBox="0 0 14 81.500"><path d="M7 1.500l3 4.600h-6z" fill="#9a9a9a"/><path d="M7 80l3-4.600h-6z" fill="#9a9a9a"/></svg>
<!-- layer toolbar -->
<div class="btn" style="left:761.500px;top:292.500px"><svg viewBox="0 0 17 17"><path d="M4.800 3.500h5l2.600 2.600v7.500H4.800z" fill="none" stroke="#ececec" stroke-width="1.200"/></svg></div>
<div class="btn" style="left:782px;top:292.500px"><svg viewBox="0 0 17 17"><path d="M4.800 3.500h5l2.600 2.600v7.500H4.800z" fill="none" stroke="#ececec" stroke-width="1.200"/><circle cx="8.600" cy="8.400" r="1.300" fill="none" stroke="#ececec" stroke-width=".8"/><circle cx="8.600" cy="10.800" r="1.300" fill="none" stroke="#ececec" stroke-width=".8"/></svg></div>
<div class="btn" style="left:802.500px;top:292.500px"><svg viewBox="0 0 17 17"><path d="M4.800 3.500h5l2.600 2.600v7.500H4.800z" fill="none" stroke="#ececec" stroke-width="1.200"/><path d="M7.600 8.200l1.200-.8v4.600" fill="none" stroke="#ececec" stroke-width=".9"/></svg></div>
<div class="btn" style="left:822.500px;top:292.500px;width:23px"><svg viewBox="0 0 23 17" style="width:23px"><path d="M4 3.500h5l2.600 2.600v7.500H4z" fill="none" stroke="#ececec" stroke-width="1.200"/><path d="M8.600 11.300h4.400M10.800 9.100v4.400" stroke="#ececec" stroke-width="1.3"/><path d="M8.200 8.700h5.200v5.200H8.200z" fill="none"/><path d="M14.500 7.500h5l-2.500 2.800z" fill="#ececec"/></svg></div>
<div class="btn" style="left:848px;top:292.500px"><svg viewBox="0 0 17 17"><path d="M3 5h4l1.200 1.300H14v7H3z" fill="#ececec"/></svg></div>
<div class="vsep" style="left:869px;top:296.500px"></div>
<div class="btn" style="left:873px;top:292.500px"><svg viewBox="0 0 17 17"><g fill="none" stroke="#ececec" stroke-width="1.100"><rect x="4" y="6.200" width="7" height="7"/><path d="M6.200 6.200V4h7v7h-2.200"/></g></svg></div>
<div class="dbtn" style="left:894px;top:292.500px"><svg viewBox="0 0 17 17"><rect x="3.500" y="4" width="3.500" height="3.500" fill="none" stroke="#ececec" stroke-width=".9"/><rect x="3.500" y="10" width="3.500" height="3.500" fill="none" stroke="#ececec" stroke-width=".9"/><path d="M7 5.700h2v6H7M9 8.700h1.500" fill="none" stroke="#ececec" stroke-width=".9"/><rect x="10.500" y="6.700" width="3.800" height="4" fill="#ececec"/></svg></div>
<div class="vsep" style="left:914.500px;top:296.500px"></div>
<div class="btn" style="left:919px;top:292.500px"><svg viewBox="0 0 17 17"><path d="M4.800 6.200h7.400l-.6 7.600H5.400z" fill="#ececec"/><path d="M3.800 4.800h9.400M6.800 4.600V3.200h3.400v1.400" fill="none" stroke="#ececec" stroke-width="1.100"/><path d="M7 7.500v5M8.500 7.500v5M10 7.500v5" stroke="#474747" stroke-width=".7"/></svg></div>
<!-- ===== right: reference ===== -->
<div class="a" style="left:757px;top:314.500px;width:267px;height:4px;background:#232323"></div>
<div class="ph" style="left:757px;top:318px;width:267px;height:16px"><div class="ttl" style="left:0;right:23px;top:4.500px">Reference</div><svg class="ico" style="top:3px" viewBox="0 0 22 10"><path d="M6.600 1.700H3.900v4.800h4.800V4.100" fill="none" stroke="#c4c4c4" stroke-width=".9"/><path d="M5.900 4.500L9.500.9M7.200.8h2.400v2.400" fill="none" stroke="#c4c4c4" stroke-width=".9"/><path d="M15.900 1.300l4.900 4.900M20.800 1.300l-4.900 4.900" stroke="#e0e0e0" stroke-width="1.700"/></svg></div>
<div class="a" style="left:757px;top:334px;width:267px;height:23.500px;background:#232323"></div>
<div class="btn" style="left:760px;top:336px"><svg viewBox="0 0 17 17"><path d="M4.800 10.200a2.500 2.500 0 0 1 .2-5 3.300 3.300 0 0 1 6.300-.6 2.800 2.800 0 0 1 .9 5.600z" fill="#f0f0f0"/><path d="M8.500 14.500l-3-3.300h2V8h2v3.200h2z" fill="#f0f0f0" stroke="#474747" stroke-width=".6"/></svg></div>
<div class="btn" style="left:780px;top:336px"><svg viewBox="0 0 17 17"><path d="M3 4.500h3.600l1.100 1.200H13v1.600H5.200L3 12.500z" fill="#ececec"/><path d="M5.600 8h9l-2.200 4.800H3.400z" fill="#ececec"/></svg></div>
<div class="dbtn" style="left:800.5px;top:336px"><svg viewBox="0 0 17 17"><path d="M5.200 5.200l6.600 6.600M11.800 5.200l-6.600 6.600" stroke="#f2f2f2" stroke-width="1.700"/></svg></div>
<div class="vsep" style="left:821.5px;top:340.500px"></div>
<div class="dbtn" style="left:826px;top:336px"><svg viewBox="0 0 17 17"><circle cx="7.2" cy="7.1" r="3.4" fill="none" stroke="#e6e6e6" stroke-width="1.15"/><path d="M9.8 9.7l3.2 3.200" stroke="#e6e6e6" stroke-width="1.55"/><path d="M5.4 7.1h3.6M7.2 5.300v3.600" stroke="#e6e6e6" stroke-width="1.1"/></svg></div>
<div class="dbtn" style="left:846.5px;top:336px"><svg viewBox="0 0 17 17"><rect x="3.6" y="4.4" width="9.8" height="8.2" fill="none" stroke="#e2e2e2" stroke-width="1.05"/><path d="M5.2 6.200h2.400v4.600H5.200zM9.400 6.200h2.400v4.600H9.400z" fill="#dcdcdc"/><path d="M7.600 8.500l-1.400-1.300v2.600zM9.400 8.500l1.400-1.300v2.600z" fill="#484848"/></svg></div>
<div class="dbtn" style="left:866.5px;top:336px"><svg viewBox="0 0 17 17"><circle cx="7.2" cy="7.1" r="3.4" fill="none" stroke="#e6e6e6" stroke-width="1.15"/><path d="M9.8 9.7l3.2 3.200" stroke="#e6e6e6" stroke-width="1.55"/><path d="M5.4 7.1h3.6" stroke="#e6e6e6" stroke-width="1.1"/></svg></div>
<div class="vsep" style="left:887.5px;top:340.500px"></div>
<div class="dbtn" style="left:892px;top:336px"><svg viewBox="0 0 17 17"><path d="M4 13l.6-2.300 4.800-4.800 1.700 1.700-4.800 4.800z" fill="none" stroke="#f2f2f2" stroke-width="1.100"/><path d="M9 4.800l1-1 .9.800 1.300-1.300 1.500 1.500-1.300 1.300.8.900-1 1z" fill="#f2f2f2"/></svg></div>
<div class="btn" style="left:912.5px;top:336px;background:#58a1dc;box-shadow:none"><svg viewBox="0 0 17 17"><g stroke="#f4f8fc" stroke-width="1.45" stroke-linecap="round" fill="none"><path d="M5.4 8.9L4.9 4.8M7.300 8.300L7.200 3.400M9.200 8.300L9.600 3.700M10.900 9L11.800 5.100"/><path d="M5.300 11.200L3.100 8.800" stroke-width="1.35"/></g><path d="M4.800 8.700h6.700c.2 2.200-.4 4.100-1.300 5.600H6.300c-.9-1-1.600-2.400-2-3.700z" fill="#f4f8fc"/></svg></div>
<div class="vsep" style="left:934px;top:340.500px"></div>
<div class="dbtn" style="left:938px;top:336px"><svg viewBox="0 0 17 17"><path d="M12.800 6.200a5 5 0 1 1-6.600-2.400" fill="none" stroke="#ececec" stroke-width="1.300"/><path d="M7 1.600L4.200 4.400l3.600 1.200z" fill="#ececec"/><rect x="6.200" y="6.500" width="4.600" height="4.200" fill="#ececec" transform="rotate(-15 8.500 8.500)"/></svg></div>
<div class="dbtn" style="left:958.5px;top:336px"><svg viewBox="0 0 17 17"><rect x="5.6" y="5.6" width="5.8" height="5.800" fill="#f0f0f0"/><path d="M3.600 3.600l2.200 2.200M13.400 3.600l-2.200 2.200M13.400 13.400l-2.200-2.200M3.600 13.400l2.200-2.200" stroke="#e4e4e4" stroke-width="1.1"/></svg></div>
<div class="dbtn" style="left:978.5px;top:336px"><svg viewBox="0 0 17 17"><path d="M4.200 6.200a5 5 0 1 0 6.600-2.400" fill="none" stroke="#ececec" stroke-width="1.300"/><path d="M10 1.600l2.800 2.800-3.600 1.200z" fill="#ececec"/><rect x="6.200" y="6.500" width="4.600" height="4.200" fill="#ececec" transform="rotate(15 8.500 8.500)"/></svg></div>
<div class="vsep" style="left:999.5px;top:340.500px"></div>
<div class="dbtn" style="left:1003.5px;top:336px"><svg viewBox="0 0 17 17"><rect x="3.7" y="6.8" width="3.4" height="6.4" fill="#e8e8e8"/><rect x="10.3" y="7.3" width="2.8" height="5.4" fill="none" stroke="#e8e8e8" stroke-width="1"/><path d="M8.6 4.5v9.500" stroke="#e8e8e8" stroke-width=".8"/><path d="M5.4 5.800c.8-2.400 5.400-2.400 6.200 0" fill="none" stroke="#e8e8e8" stroke-width=".8"/></svg></div>
<div class="a chk" style="left:757px;top:357.500px;width:267px;height:31px;background-image:linear-gradient(45deg,#e6e6e6 25%,transparent 25%,transparent 75%,#e6e6e6 75%),linear-gradient(45deg,#e6e6e6 25%,transparent 25%,transparent 75%,#e6e6e6 75%)"></div>
<!-- ===== right: brush size ===== -->
<div class="a" style="left:757px;top:388.500px;width:267px;height:4px;background:#232323"></div>
<div class="ph" style="left:757px;top:392px;width:267px;height:16px"><div class="ttl" style="left:0;right:23px;top:4.500px">Brush Size</div><svg class="ico" style="top:3px" viewBox="0 0 22 10"><path d="M6.600 1.700H3.900v4.800h4.800V4.100" fill="none" stroke="#c4c4c4" stroke-width=".9"/><path d="M5.900 4.500L9.500.9M7.200.8h2.400v2.400" fill="none" stroke="#c4c4c4" stroke-width=".9"/><path d="M15.900 1.300l4.900 4.900M20.800 1.300l-4.900 4.900" stroke="#e0e0e0" stroke-width="1.700"/></svg></div>
<div class="a" style="left:757px;top:408px;width:267px;height:122.500px;background:#494745"></div>
<div class="a" style="left:757.5px;top:408.3px;width:29px;height:36.500px;background:#5b5b5b"></div>
<div class="a" style="left:771.55px;top:422.75px;width:0.9px;height:0.9px;border-radius:50%;background:#f0f0f0"></div>
<div class="t" style="left:757.5px;width:29px;text-align:center;top:437.4px;font-size:6.700px;color:#f0f0f0">1</div>
<div class="a" style="left:787.5px;top:408.3px;width:29px;height:36.500px;background:#5b5b5b"></div>
<div class="a" style="left:801.4px;top:422.6px;width:1.2px;height:1.2px;border-radius:50%;background:#f0f0f0"></div>
<div class="t" style="left:787.5px;width:29px;text-align:center;top:437.4px;font-size:6.700px;color:#f0f0f0">1.5</div>
<div class="a" style="left:817.5px;top:408.3px;width:29px;height:36.500px;background:#5b5b5b"></div>
<div class="a" style="left:831.1px;top:422.3px;width:1.8px;height:1.8px;border-radius:50%;background:#f0f0f0"></div>
<div class="t" style="left:817.5px;width:29px;text-align:center;top:437.4px;font-size:6.700px;color:#f0f0f0">2</div>
<div class="a" style="left:847.5px;top:408.3px;width:29px;height:36.500px;background:#5b5b5b"></div>
<div class="a" style="left:860.7px;top:421.9px;width:2.6px;height:2.6px;border-radius:50%;background:#f0f0f0"></div>
<div class="t" style="left:847.5px;width:29px;text-align:center;top:437.4px;font-size:6.700px;color:#f0f0f0">3</div>
<div class="a" style="left:877.5px;top:408.3px;width:29px;height:36.500px;background:#5b5b5b"></div>
<div class="a" style="left:890.1px;top:421.3px;width:3.8px;height:3.8px;border-radius:50%;background:#f0f0f0"></div>
<div class="t" style="left:877.5px;width:29px;text-align:center;top:437.4px;font-size:6.700px;color:#f0f0f0">4</div>
<div class="a" style="left:907.5px;top:408.3px;width:29px;height:36.500px;background:#5b5b5b"></div>
<div class="a" style="left:919.8px;top:421px;width:4.4px;height:4.4px;border-radius:50%;background:#f0f0f0"></div>
<div class="t" style="left:907.5px;width:29px;text-align:center;top:437.4px;font-size:6.700px;color:#f0f0f0">5</div>
<div class="a" style="left:937.5px;top:408.3px;width:29px;height:36.500px;background:#5b5b5b"></div>
<div class="a" style="left:949px;top:420.2px;width:6px;height:6px;border-radius:50%;background:#f0f0f0"></div>
<div class="t" style="left:937.5px;width:29px;text-align:center;top:437.4px;font-size:6.700px;color:#f0f0f0">7</div>
<div class="a" style="left:967.5px;top:408.3px;width:29px;height:36.500px;background:#5b5b5b"></div>
<div class="a" style="left:978px;top:419.2px;width:8px;height:8px;border-radius:50%;background:#f0f0f0"></div>
<div class="t" style="left:967.5px;width:29px;text-align:center;top:437.4px;font-size:6.700px;color:#f0f0f0">10</div>
<div class="a" style="left:757.5px;top:446px;width:29px;height:36.500px;background:#5b5b5b"></div>
<div class="a" style="left:767.3px;top:455.7px;width:9.4px;height:9.4px;border-radius:50%;background:#f0f0f0"></div>
<div class="t" style="left:757.5px;width:29px;text-align:center;top:475.1px;font-size:6.700px;color:#f0f0f0">12</div>
<div class="a" style="left:787.5px;top:446px;width:29px;height:36.500px;background:#5b5b5b"></div>
<div class="a" style="left:796.4px;top:454.8px;width:11.2px;height:11.2px;border-radius:50%;background:#f0f0f0"></div>
<div class="t" style="left:787.5px;width:29px;text-align:center;top:475.1px;font-size:6.700px;color:#f0f0f0">15</div>
<div class="a" style="left:817.5px;top:446px;width:29px;height:36.500px;background:#5b5b5b"></div>
<div class="a" style="left:824.3px;top:452.7px;width:15.4px;height:15.4px;border-radius:50%;background:#f0f0f0"></div>
<div class="t" style="left:817.5px;width:29px;text-align:center;top:475.1px;font-size:6.700px;color:#f0f0f0">20</div>
<div class="a" style="left:847.5px;top:446px;width:29px;height:36.500px;background:#5b5b5b"></div>
<div class="a" style="left:853px;top:451.4px;width:18px;height:18px;border-radius:50%;background:#f0f0f0"></div>
<div class="t" style="left:847.5px;width:29px;text-align:center;top:475.1px;font-size:6.700px;color:#f0f0f0">25</div>
<div class="a" style="left:877.5px;top:446px;width:29px;height:36.500px;background:#5b5b5b"></div>
<div class="a" style="left:883px;top:451.4px;width:18px;height:18px;border-radius:50%;background:#f0f0f0"></div>
<div class="t" style="left:877.5px;width:29px;text-align:center;top:475.1px;font-size:6.700px;color:#f0f0f0">30</div>
<div class="a" style="left:907.5px;top:446px;width:29px;height:36.500px;background:#5b5b5b"></div>
<div class="a" style="left:913px;top:451.4px;width:18px;height:18px;border-radius:50%;background:#f0f0f0"></div>
<div class="t" style="left:907.5px;width:29px;text-align:center;top:475.1px;font-size:6.700px;color:#f0f0f0">40</div>
<div class="a" style="left:937.5px;top:446px;width:29px;height:36.500px;background:#5b5b5b"></div>
<div class="a" style="left:943px;top:451.4px;width:18px;height:18px;border-radius:50%;background:#f0f0f0"></div>
<div class="t" style="left:937.5px;width:29px;text-align:center;top:475.1px;font-size:6.700px;color:#f0f0f0">50</div>
<div class="a" style="left:967.5px;top:446px;width:29px;height:36.500px;background:#5b5b5b"></div>
<div class="a" style="left:973px;top:451.4px;width:18px;height:18px;border-radius:50%;background:#f0f0f0"></div>
<div class="t" style="left:967.5px;width:29px;text-align:center;top:475.1px;font-size:6.700px;color:#f0f0f0">70</div>
<div class="a" style="left:757.5px;top:483.7px;width:29px;height:36.500px;background:#5b5b5b"></div>
<div class="a" style="left:763px;top:489.1px;width:18px;height:18px;border-radius:50%;background:#f0f0f0"></div>
<div class="t" style="left:757.5px;width:29px;text-align:center;top:512.8px;font-size:6.700px;color:#f0f0f0">100</div>
<div class="a" style="left:787.5px;top:483.7px;width:29px;height:36.500px;background:#5b5b5b"></div>
<div class="a" style="left:793px;top:489.1px;width:18px;height:18px;border-radius:50%;background:#f0f0f0"></div>
<div class="t" style="left:787.5px;width:29px;text-align:center;top:512.8px;font-size:6.700px;color:#f0f0f0">150</div>
<div class="a" style="left:817.5px;top:483.7px;width:29px;height:36.500px;background:#5b5b5b"></div>
<div class="a" style="left:823px;top:489.1px;width:18px;height:18px;border-radius:50%;background:#f0f0f0"></div>
<div class="t" style="left:817.5px;width:29px;text-align:center;top:512.8px;font-size:6.700px;color:#f0f0f0">200</div>
<div class="a" style="left:847.5px;top:483.7px;width:29px;height:36.500px;background:#5b5b5b"></div>
<div class="a" style="left:853px;top:489.1px;width:18px;height:18px;border-radius:50%;background:#f0f0f0"></div>
<div class="t" style="left:847.5px;width:29px;text-align:center;top:512.8px;font-size:6.700px;color:#f0f0f0">300</div>
<div class="a" style="left:877.5px;top:483.7px;width:29px;height:36.500px;background:#5b5b5b"></div>
<div class="a" style="left:883px;top:489.1px;width:18px;height:18px;border-radius:50%;background:#f0f0f0"></div>
<div class="t" style="left:877.5px;width:29px;text-align:center;top:512.8px;font-size:6.700px;color:#f0f0f0">400</div>
<div class="a" style="left:907.5px;top:483.7px;width:29px;height:36.500px;background:#5b5b5b"></div>
<div class="a" style="left:913px;top:489.1px;width:18px;height:18px;border-radius:50%;background:#f0f0f0"></div>
<div class="t" style="left:907.5px;width:29px;text-align:center;top:512.8px;font-size:6.700px;color:#f0f0f0">500</div>
<div class="a" style="left:937.5px;top:483.7px;width:29px;height:36.500px;background:#5b5b5b"></div>
<div class="a" style="left:943px;top:489.1px;width:18px;height:18px;border-radius:50%;background:#f0f0f0"></div>
<div class="t" style="left:937.5px;width:29px;text-align:center;top:512.8px;font-size:6.700px;color:#f0f0f0">700</div>
<div class="a" style="left:967.5px;top:483.7px;width:29px;height:36.500px;background:#5b5b5b"></div>
<div class="a" style="left:973px;top:489.1px;width:18px;height:18px;border-radius:50%;background:#f0f0f0"></div>
<div class="t" style="left:967.5px;width:29px;text-align:center;top:512.8px;font-size:6.700px;color:#f0f0f0">1000</div>
<div class="a" style="left:1008.500px;top:408px;width:14px;height:122px;background:linear-gradient(90deg,#3c3b3a,#343434 50%,#2d2d2d)"></div>
<div class="a" style="left:1009px;top:416.500px;width:13px;height:105px;background:linear-gradient(90deg,#7c7c7c,#686868);border-radius:4px"></div>
<svg class="a" style="left:1008.500px;top:408px" width="14" height="122" viewBox="0 0 14 122"><path d="M7 1.500l3 4.600h-6z" fill="#a4a4a4"/><path d="M7 121l3-4.600h-6z" fill="#a4a4a4"/></svg>
<!-- ===== status bar ===== -->
<div class="a" style="left:0;top:530.500px;width:1024px;height:15.500px;background:#232323"></div>
<div class="t" style="left:5px;top:535px;font-size:8.400px;color:#cfcfcf;word-spacing:0">893 * 717 pixel&nbsp;&nbsp; (23.6 * 19cm)&nbsp;&nbsp; 96 dpi&nbsp;&nbsp; 66 %&nbsp;&nbsp; ( 522, 3 )</div>
<!-- ===== windows taskbar ===== -->
<div class="a" style="left:0;top:546px;width:1024px;height:30px;background:#e3e1df"></div>
<svg class="a" style="left:12px;top:555px" width="13" height="13" viewBox="0 0 13 13"><path d="M0 1.800l5.300-.8v5H0zM6 .9L12.500 0v6H6zM0 6.800h5.300v5l-5.300-.8zM6 6.800h6.500v6L6 11.900z" fill="#111"/></svg>
<div class="a" style="left:37px;top:546.500px;width:256px;height:29.500px;background:#ffffff"></div>
<svg class="a" style="left:44px;top:553px" width="16" height="16" viewBox="0 0 16 16"><circle cx="9.200" cy="6.300" r="4" fill="none" stroke="#222" stroke-width="1.100"/><path d="M6.300 9.300L1.800 14" stroke="#222" stroke-width="1.200"/></svg>
<div class="t" style="left:65.500px;top:556px;font-size:11.300px;color:#2a2a2a;transform:scaleX(.96);transform-origin:0 0">Type here to search</div>
<svg class="a" style="left:303px;top:553px" width="16" height="16" viewBox="0 0 16 16"><circle cx="8.200" cy="8" r="5.200" fill="none" stroke="#161616" stroke-width="1.600"/></svg>
<svg class="a" style="left:340px;top:553px" width="16" height="16" viewBox="0 0 16 16"><g fill="none" stroke="#161616" stroke-width="1.100"><rect x="3.200" y="4.400" width="6.600" height="6.800"/><path d="M1.800 2.600h9.400M1.800 13.200h9.400"/><path d="M12.800 4.200v2M12.800 8.200v3.200" stroke-width="1.400"/></g></svg>
<svg class="a" style="left:377px;top:552px" width="18" height="18" viewBox="0 0 18 18"><rect x=".5" y=".5" width="17" height="16.500" rx="4.500" fill="#4a8cf7"/><rect x="3.800" y="6" width="7" height="5.600" rx="1.200" fill="#fff"/><path d="M11.300 8l3-1.800v5.200l-3-1.800z" fill="#fff"/></svg>
<svg class="a" style="left:413px;top:552px" width="18" height="18" viewBox="0 0 18 18"><path d="M1 2.500h5.500l1.200 1.600H17v3H1z" fill="#e9b530"/><rect x="1" y="5" width="16" height="9" fill="#f7d354"/><path d="M4 10h10v6h-2.800v-3H6.800v3H4z" fill="#3c8fd8"/></svg>
<svg class="a" style="left:450px;top:553px" width="19" height="16" viewBox="0 0 19 16"><path d="M1 3.500h3.500l1.200-2h5.600l1.200 2H18v11.500H1z" fill="#6b6e72"/><circle cx="9.500" cy="8.800" r="4" fill="#8d93a0"/><circle cx="9.500" cy="8.800" r="2.600" fill="#6f7fd8"/><circle cx="9.500" cy="8.800" r="1.200" fill="#9fb0ee"/></svg>
<svg class="a" style="left:487px;top:552px" width="18" height="18" viewBox="0 0 18 18"><circle cx="9" cy="9" r="8.500" fill="#dd4b3e"/><path d="M9 9L1.640 4.750A8.500 8.500 0 0 0 9 17.500z" fill="#1f9d58"/><path d="M9 9l7.360-4.250A8.500 8.500 0 0 1 9 17.500z" fill="#fbc116"/><path d="M9 .5A8.500 8.500 0 0 1 16.360 4.750H9z" fill="#dd4b3e"/><circle cx="9" cy="9" r="4" fill="#fff"/><circle cx="9" cy="9" r="3.100" fill="#4a8af4"/></svg>
<div class="a" style="left:481px;top:574px;width:29px;height:2px;background:#4a90d9"></div>
<svg class="a" style="left:524px;top:552px" width="18" height="18" viewBox="0 0 18 18"><ellipse cx="9" cy="9" rx="8.300" ry="8.600" fill="#e3222b"/><ellipse cx="9" cy="9" rx="3.500" ry="6" fill="#e3e1df"/></svg>
<div class="a" style="left:552px;top:546px;width:35.500px;height:30px;background:#f3f2f1"></div>
<div class="a" style="left:552px;top:574px;width:35.500px;height:2px;background:#3c86d6"></div>
<svg class="a" style="left:563px;top:554px" width="14" height="14" viewBox="0 0 9 9"><circle cx="4.500" cy="4.500" r="4.300" fill="#2fb4a0"/><path d="M4.500 0.200A4.300 4.300 0 0 0 0.400 5.600L4.500 4.500Z" fill="#e9503c"/><path d="M4.500 0.200A4.300 4.300 0 0 1 8.800 4.500L4.500 4.500Z" fill="#f3c23a"/><circle cx="5" cy="5.200" r="2" fill="#2e8fd0"/></svg>
<!-- tray -->
<svg class="a" style="left:742px;top:556px" width="12" height="10" viewBox="0 0 12 10"><path d="M1.200 7.600l4.600-4.800 4.600 4.800" fill="none" stroke="#222" stroke-width="1.200"/></svg>
<svg class="a" style="left:764px;top:554px" width="15" height="14" viewBox="0 0 15 14"><path d="M7.500.8l2 2.600 3.600-.6-.8 3.400 2.200 2.400-3.200 1 .2 3.400-3.600-1.400L4 13l.2-3.400-3.400-1 2.400-2.400-.8-3.400 3.400.6z" fill="#f47d20"/><circle cx="7.300" cy="7" r="1.900" fill="none" stroke="#fff" stroke-width="1"/></svg>
<svg class="a" style="left:790px;top:555px" width="13" height="12" viewBox="0 0 13 12"><g fill="none" stroke="#333" stroke-width="1"><path d="M2 11a9 9 0 0 1 9-9M4.600 11a6.400 6.400 0 0 1 6.400-6.400M7.200 11A3.800 3.800 0 0 1 11 7.200"/></g><circle cx="10.300" cy="10.300" r="1" fill="#333"/></svg>
<div class="a" style="left:813.500px;top:555px;width:12.500px;height:12.500px;background:#fff;border:1px solid #d06a6a"></div>
<div class="t" style="left:813.500px;width:12.500px;text-align:center;top:556px;font-size:11px;color:#d42020">V</div>
<svg class="a" style="left:836px;top:555px" width="15" height="11" viewBox="0 0 15 11"><rect x="4" y="2.500" width="9.600" height="6" fill="none" stroke="#222" stroke-width="1"/><rect x="5.200" y="3.700" width="7.200" height="3.600" fill="#222"/><path d="M1 1v3.200h3M2.600 4.200v2.600h1.400" fill="none" stroke="#222" stroke-width="1.100"/></svg>
<svg class="a" style="left:860px;top:554px" width="14" height="13" viewBox="0 0 14 13"><path d="M1.500 4.600h2.300l3-2.800v9.400l-3-2.800H1.500z" fill="none" stroke="#222" stroke-width="1"/><path d="M8.600 4.400a3 3 0 0 1 0 4.200M10.400 2.800a5.200 5.200 0 0 1 0 7.400" fill="none" stroke="#222" stroke-width=".9"/></svg>
<svg class="a" style="left:887px;top:554px" width="14" height="14" viewBox="0 0 14 14"><path d="M11.500 1.500c1.500 1 .5 3-1.500 4.500S5.500 9.500 4.500 11s-3 1.500-3 0 2-2 3-1 1.500 2.500 3 1M8.500 2.500l-3 8" fill="none" stroke="#222" stroke-width="1.100"/></svg>
<div class="t" style="left:913.500px;top:556px;font-size:9.300px;color:#222;transform:scaleX(.89);transform-origin:0 0">ENG</div>
<div class="t" style="left:930px;width:60px;text-align:center;top:548.500px;font-size:9.300px;color:#222;transform:scaleX(.925)">3:37 PM</div>
<div class="t" style="left:930px;width:60px;text-align:center;top:563px;font-size:9.300px;color:#222;transform:scaleX(.92)">7/21/2021</div>
<svg class="a" style="left:992px;top:553px" width="20" height="20" viewBox="0 0 20 20"><path d="M1.500 1.500h11.500v8.500H6.500l-2.500 2.500V10H1.500z" fill="#1c1c1c"/><path d="M3.500 4h7.500M3.500 6h7.500M3.500 8h4.500" stroke="#e3e1df" stroke-width=".8"/><circle cx="12.500" cy="13.500" r="4.600" fill="#e3e1df" stroke="#555" stroke-width=".9"/></svg>
<div class="t" style="left:1000px;width:9px;text-align:center;top:562.500px;font-size:8px;color:#222">1</div>
</body></html>
